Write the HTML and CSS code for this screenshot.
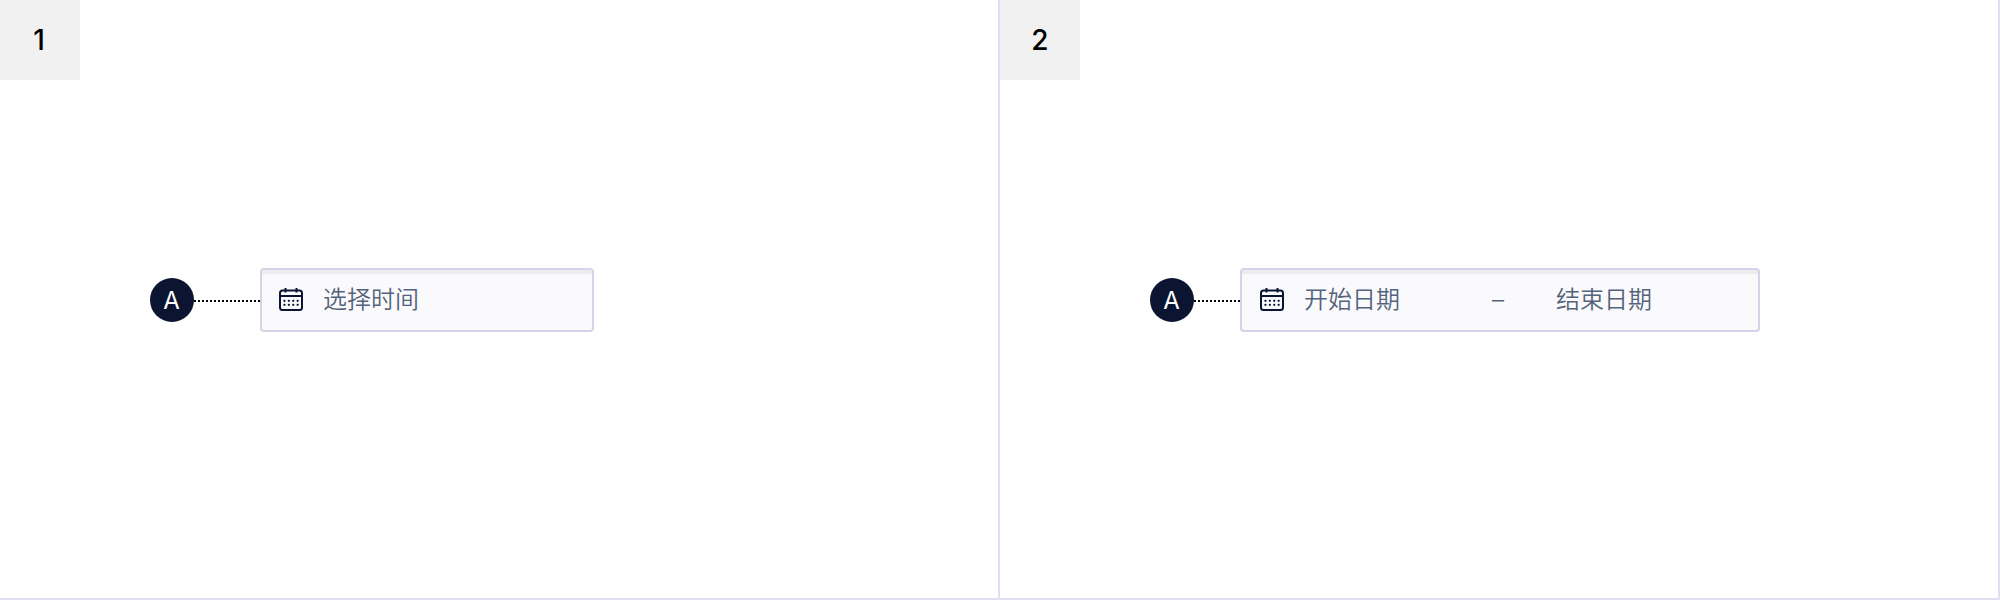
FILE: index.html
```html
<!DOCTYPE html>
<html lang="zh-CN">
<head>
<meta charset="utf-8">
<title>选择时间</title>
<link rel="stylesheet" href="styles.css">
</head>
<body>
<svg width="0" height="0" class="defs">
  <symbol id="calendar" viewBox="0 0 24 24">
    <g fill="none" stroke="currentColor" stroke-width="2">
      <rect x="1" y="2.5" width="22" height="19.5" rx="2.5"/>
      <path d="M1 8H23"/>
      <path d="M6.5 0V4.6M17.5 0V4.6"/>
    </g>
    <path fill="none" stroke="currentColor" stroke-width="2.2" stroke-linecap="round" d="M5.4 12.8h.1M9.8 12.8h.1M14.2 12.8h.1M18.6 12.8h.1M5.4 16.8h.1M9.8 16.8h.1M14.2 16.8h.1M18.6 16.8h.1"/>
  </symbol>
</svg>
<main class="board">
  <section class="panel">
    <div class="number number-one">1</div>
    <div class="example">
      <span class="marker">A</span>
      <span class="leader"></span>
      <div class="field">
        <svg class="icon"><use href="#calendar"/></svg>
        <span class="placeholder">选择时间</span>
      </div>
    </div>
  </section>
  <section class="panel">
    <div class="number">2</div>
    <div class="example">
      <span class="marker">A</span>
      <span class="leader leader-short"></span>
      <div class="field field-range">
        <svg class="icon"><use href="#calendar"/></svg>
        <span class="placeholder start">开始日期</span>
        <span class="placeholder dash">–</span>
        <span class="placeholder">结束日期</span>
      </div>
    </div>
  </section>
</main>
</body>
</html>
```
FILE: styles.css
```css
* { box-sizing: border-box; }
body {
  margin: 0;
  background: #fff;
  font-family: Inter, "Noto Sans CJK SC", sans-serif;
}
.defs { display: block; }
.board {
  display: grid;
  grid-template-columns: 1fr 1fr;
  height: 600px;
}
.panel {
  border-right: 2px solid #dee0f2;
  border-bottom: 2px solid #dee0f2;
}
.number {
  display: flex;
  align-items: center;
  justify-content: center;
  width: 80px;
  height: 80px;
  background: #f1f1f1;
  color: #000;
  font-size: 28px;
  font-weight: 500;
}
.number-one { padding-right: 2px; }
.example {
  display: flex;
  align-items: center;
  margin: 188px 0 0 150px;
}
.marker {
  display: flex;
  align-items: center;
  justify-content: center;
  width: 44px;
  height: 44px;
  padding-right: 1px;
  border-radius: 50%;
  background: #0b1531;
  color: #fff;
  font-size: 24px;
}
.leader {
  width: 66px;
  height: 2px;
  margin-top: 2px;
  background: repeating-linear-gradient(90deg, #000 0 2px, transparent 2px 4px);
}
.leader-short { width: 46px; }
.field {
  display: flex;
  align-items: center;
  width: 334px;
  height: 64px;
  padding-left: 17px;
  border: 2px solid #d2d5ea;
  border-radius: 4px;
  background: #fafafc;
  box-shadow: inset 0 4px #ececee;
}
.field-range { width: 520px; padding-left: 18px; }
.icon {
  width: 24px;
  height: 24px;
  margin-right: 20px;
  color: #0b1531;
}
.placeholder {
  padding-bottom: 4px;
  color: #54637b;
  font-family: "Noto Sans CJK SC", sans-serif;
  font-size: 24px;
  font-weight: 350;
  line-height: 36px;
  white-space: nowrap;
}
.start { width: 188px; }
.dash {
  width: 64px;
  padding-bottom: 0;
  font-family: Inter, sans-serif;
}
```
